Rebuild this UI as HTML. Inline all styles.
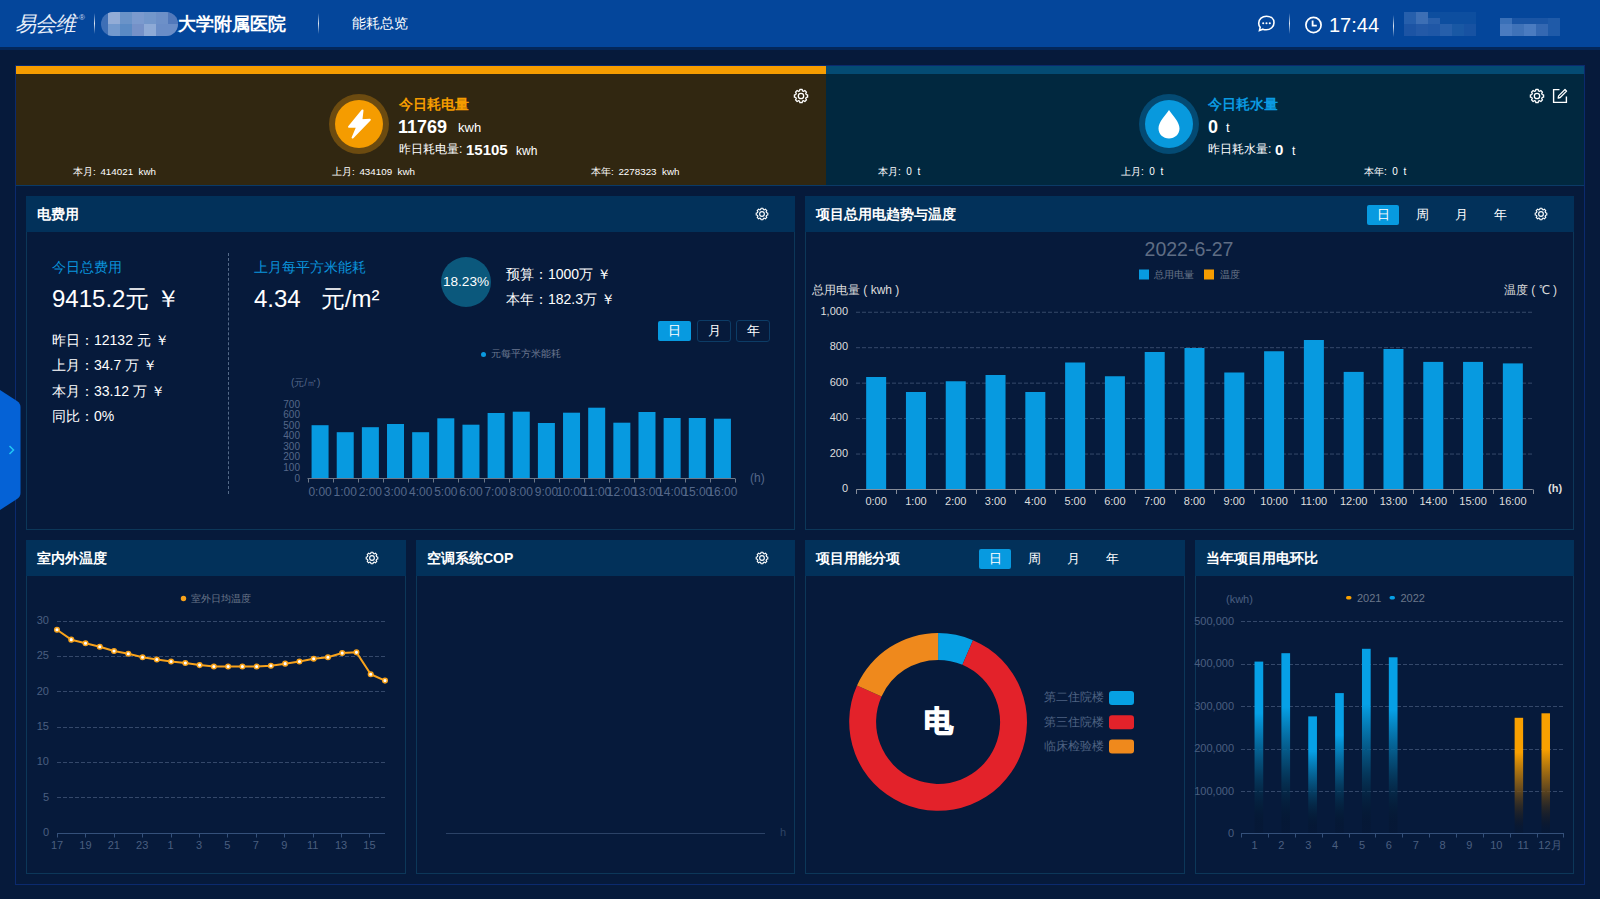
<!DOCTYPE html>
<html><head><meta charset="utf-8">
<style>
*{box-sizing:border-box}
html,body{margin:0;padding:0}
body{width:1600px;height:899px;background:#061a3b;position:relative;overflow:hidden;font-family:"Liberation Sans",sans-serif;color:#fff}
.a{position:absolute}
.hdr{left:0;top:0;width:1600px;height:47px;background:#04469b}
.strip{left:0;top:47px;width:1600px;height:3px;background:#03275a}
.sep{width:1px;background:linear-gradient(rgba(255,255,255,0),rgba(255,255,255,.85) 50%,rgba(255,255,255,0))!important}
.outer{left:15px;top:65px;width:1570px;height:820px;border:1px solid #0b2a6e}
.panel{border:1px solid #0c3759;background:#061a3b}
.ph{left:-1px;top:-1px;right:-1px;height:36px;background:#02315a}
.pt{left:11px;top:0;line-height:36px;font-size:14px;font-weight:bold;color:#fff}
.tabs span{position:absolute;top:9px;width:32px;height:20px;line-height:20px;text-align:center;font-size:13px;color:#fff;border-radius:2px}
.tabs span.on{background:#079ae0}
.gear{width:16px;height:16px}
.lbl{font-size:11px;color:#5d708c}
</style></head>
<body>
<svg width="0" height="0" style="position:absolute"><defs><symbol id="gear" viewBox="0 0 16 16"><path d="M6.60 2.78 L6.84 1.40 L9.16 1.40 L9.40 2.78 L10.70 3.32 L11.84 2.51 L13.49 4.16 L12.68 5.30 L13.22 6.60 L14.60 6.84 L14.60 9.16 L13.22 9.40 L12.68 10.70 L13.49 11.84 L11.84 13.49 L10.70 12.68 L9.40 13.22 L9.16 14.60 L6.84 14.60 L6.60 13.22 L5.30 12.68 L4.16 13.49 L2.51 11.84 L3.32 10.70 L2.78 9.40 L1.40 9.16 L1.40 6.84 L2.78 6.60 L3.32 5.30 L2.51 4.16 L4.16 2.51 L5.30 3.32Z" fill="none" stroke="#fff" stroke-width="1.3" stroke-linejoin="round"/><circle cx="8" cy="8" r="2.7" fill="none" stroke="#fff" stroke-width="1.3"/></symbol></defs></svg>
<!-- header -->
<div class="a hdr"></div>
<div class="a strip"></div>
<!-- logo -->
<div class="a" style="left:15px;top:11px;font-size:21px;line-height:26px;color:#e8eef8;font-style:italic;letter-spacing:-1px">易会维</div>
<div class="a" style="left:79px;top:13px;font-size:8px;color:#c9d6ee">®</div>
<div class="a sep" style="left:94px;top:13px;height:21px"></div>
<!-- mosaic -->
<div class="a" style="left:101px;top:12px;width:77px;height:24px;border-radius:12px;background:#3e6fb6;overflow:hidden">
 <div class="a" style="left:7px;top:0;width:12px;height:12px;background:#93acd6"></div>
 <div class="a" style="left:19px;top:0;width:12px;height:12px;background:#6a93c8"></div>
 <div class="a" style="left:31px;top:0;width:12px;height:12px;background:#7b9ace"></div>
 <div class="a" style="left:43px;top:0;width:12px;height:12px;background:#7397cb"></div>
 <div class="a" style="left:55px;top:0;width:12px;height:12px;background:#6d90c8"></div>
 <div class="a" style="left:67px;top:0;width:12px;height:12px;background:#5279bb"></div>
 <div class="a" style="left:7px;top:12px;width:12px;height:12px;background:#7399cd"></div>
 <div class="a" style="left:19px;top:12px;width:12px;height:12px;background:#5a8ac4"></div>
 <div class="a" style="left:31px;top:12px;width:12px;height:12px;background:#7591c8"></div>
 <div class="a" style="left:43px;top:12px;width:12px;height:12px;background:#8eaad6"></div>
 <div class="a" style="left:55px;top:12px;width:12px;height:12px;background:#6a8dc7"></div>
 <div class="a" style="left:67px;top:12px;width:12px;height:12px;background:#6a8dc7"></div>
</div>
<div class="a" style="left:178px;top:11px;font-size:17.7px;line-height:26px;font-weight:bold;color:#fff">大学附属医院</div>
<div class="a sep" style="left:318px;top:13px;height:21px"></div>
<div class="a" style="left:352px;top:13px;font-size:14px;line-height:20px;color:#fff">能耗总览</div>
<!-- right header -->
<svg class="a" style="left:1257px;top:15px" width="19" height="18" viewBox="0 0 19 18"><path d="M9.5 1.2C5.2 1.2 1.7 4.2 1.7 8.2c0 1.6.6 3 1.5 4.1l-.7 3.1 3.4-1.2c1 .4 2.1.6 3.3.6 4.3 0 7.8-3.1 7.8-7.1S13.8 1.2 9.5 1.2z" fill="none" stroke="#fff" stroke-width="1.6"/><circle cx="6.2" cy="8.3" r="1.05" fill="#fff"/><circle cx="9.5" cy="8.3" r="1.05" fill="#fff"/><circle cx="12.8" cy="8.3" r="1.05" fill="#fff"/></svg>
<div class="a sep" style="left:1289px;top:13px;height:21px"></div>
<svg class="a" style="left:1304px;top:16px" width="19" height="18" viewBox="0 0 19 18"><circle cx="9.5" cy="9" r="7.6" fill="none" stroke="#fff" stroke-width="1.7"/><path d="M8.6 4.6v5h4.2" fill="none" stroke="#fff" stroke-width="1.8"/></svg>
<div class="a" style="left:1329px;top:13px;font-size:20px;line-height:24px;color:#fff">17:44</div>
<div class="a sep" style="left:1393px;top:15px;height:22px"></div>
<div class="a" style="left:1404px;top:12px;width:72px;height:24px;background:#0f4fa0;opacity:.9">
 <div class="a" style="left:0;top:0;width:12px;height:12px;background:#2a62ae"></div>
 <div class="a" style="left:12px;top:0;width:12px;height:12px;background:#4474b8"></div>
 <div class="a" style="left:24px;top:6px;width:12px;height:6px;background:#2d62ad"></div>
 <div class="a" style="left:0;top:12px;width:12px;height:12px;background:#1f56a5"></div>
 <div class="a" style="left:12px;top:12px;width:12px;height:12px;background:#275ca9"></div>
 <div class="a" style="left:24px;top:12px;width:12px;height:12px;background:#2359a8"></div>
 <div class="a" style="left:36px;top:12px;width:12px;height:12px;background:#2a62ad"></div>
 <div class="a" style="left:48px;top:12px;width:12px;height:12px;background:#1c5aa6"></div>
 <div class="a" style="left:60px;top:12px;width:12px;height:12px;background:#1a54a3"></div>
</div>
<div class="a" style="left:1500px;top:18px;width:60px;height:18px;background:#1a55a5">
 <div class="a" style="left:0;top:0;width:12px;height:6px;background:#3a70b8"></div>
 <div class="a" style="left:0;top:6px;width:12px;height:12px;background:#4a7bc0"></div>
 <div class="a" style="left:12px;top:6px;width:12px;height:12px;background:#3f72b8"></div>
 <div class="a" style="left:24px;top:6px;width:12px;height:12px;background:#4a7bc0"></div>
 <div class="a" style="left:36px;top:6px;width:12px;height:12px;background:#3468b2"></div>
 <div class="a" style="left:48px;top:0;width:12px;height:18px;background:#1f5aa8"></div>
</div>

<div class="a outer"></div>

<!-- top panel -->
<div class="a" style="left:16px;top:66px;width:810px;height:119px;background:#312711"></div>
<div class="a" style="left:16px;top:66px;width:810px;height:8px;background:#f59c00"></div>
<div class="a" style="left:826px;top:66px;width:758px;height:119px;background:#01283f"></div>
<div class="a" style="left:826px;top:66px;width:758px;height:8px;background:#044b73"></div>
<div class="a" style="left:16px;top:185px;width:1568px;height:1px;background:#0b3a66"></div>
<!-- electricity -->
<div class="a" style="left:329px;top:94px;width:60px;height:60px;border-radius:50%;background:#6c4b10"></div>
<div class="a" style="left:335px;top:100px;width:48px;height:48px;border-radius:50%;background:#f59c00"></div>
<svg class="a" style="left:335px;top:100px" width="48" height="48" viewBox="0 0 48 48"><path d="M27.5 10.5 L14 26.8 L22.3 26.6 L17.6 37.6 L34.8 19.8 L26.4 20.2 Z" fill="#fff" stroke="#fff" stroke-width="2" stroke-linejoin="round"/></svg>
<div class="a" style="left:399px;top:95px;font-size:14px;line-height:18px;font-weight:bold;color:#f59c00">今日耗电量</div>
<div class="a" style="left:398px;top:117px;font-size:18px;line-height:20px;font-weight:bold;color:#fff">11769</div>
<div class="a" style="left:458px;top:120px;font-size:13px;line-height:16px;color:#fff">kwh</div>
<div class="a" style="left:399px;top:141px;font-size:12px;line-height:16px;color:#fff">昨日耗电量:</div>
<div class="a" style="left:466px;top:142px;font-size:15px;line-height:16px;font-weight:bold;color:#fff">15105</div>
<div class="a" style="left:516px;top:144px;font-size:12px;line-height:14px;color:#fff">kwh</div>
<div class="a" style="left:73px;top:166px;font-size:9.8px;line-height:12px;color:#fff">本月:&thinsp; 414021&nbsp; kwh</div>
<div class="a" style="left:332px;top:166px;font-size:9.8px;line-height:12px;color:#fff">上月:&thinsp; 434109&nbsp; kwh</div>
<div class="a" style="left:591px;top:166px;font-size:9.8px;line-height:12px;color:#fff">本年:&thinsp; 2278323&nbsp; kwh</div>
<svg class="a" style="left:793px;top:88px" width="16" height="16" viewBox="0 0 16 16"><use href="#gear"/></svg>
<!-- water -->
<div class="a" style="left:1139px;top:94px;width:60px;height:60px;border-radius:50%;background:#044a73"></div>
<div class="a" style="left:1145px;top:100px;width:48px;height:48px;border-radius:50%;background:#0899dd"></div>
<svg class="a" style="left:1145px;top:100px" width="48" height="48" viewBox="0 0 48 48"><path d="M24 10 C20 16 13.5 22 13.5 28.5 C13.5 34.3 18.2 38.5 24 38.5 C29.8 38.5 34.5 34.3 34.5 28.5 C34.5 22 28 16 24 10 Z" fill="#fff"/></svg>
<div class="a" style="left:1208px;top:95px;font-size:14px;line-height:18px;font-weight:bold;color:#0b9ae2">今日耗水量</div>
<div class="a" style="left:1208px;top:117px;font-size:18px;line-height:20px;font-weight:bold;color:#fff">0</div>
<div class="a" style="left:1226px;top:120px;font-size:13px;line-height:16px;color:#fff">t</div>
<div class="a" style="left:1208px;top:141px;font-size:12px;line-height:16px;color:#fff">昨日耗水量:</div>
<div class="a" style="left:1275px;top:142px;font-size:15px;line-height:16px;font-weight:bold;color:#fff">0</div>
<div class="a" style="left:1292px;top:144px;font-size:12px;line-height:14px;color:#fff">t</div>
<div class="a" style="left:878px;top:166px;font-size:10px;line-height:12px;color:#fff">本月:&nbsp; 0&nbsp; t</div>
<div class="a" style="left:1121px;top:166px;font-size:10px;line-height:12px;color:#fff">上月:&nbsp; 0&nbsp; t</div>
<div class="a" style="left:1364px;top:166px;font-size:10px;line-height:12px;color:#fff">本年:&nbsp; 0&nbsp; t</div>
<svg class="a" style="left:1529px;top:88px" width="16" height="16" viewBox="0 0 16 16"><use href="#gear"/></svg>
<svg class="a" style="left:1552px;top:88px" width="16" height="16" viewBox="0 0 16 16"><path d="M7.5 1.6H1.6v12.8h12.8V8.6" fill="none" stroke="#fff" stroke-width="1.4"/><path d="M6.2 10 L6.6 7.9 L13 1.5 L14.6 3.1 L8.2 9.5 Z" fill="none" stroke="#fff" stroke-width="1.3" stroke-linejoin="round"/></svg>

<!-- row2 panels -->
<div class="a panel" style="left:26px;top:196px;width:769px;height:334px"><div class="a ph"><div class="a pt">电费用</div><svg class="a" style="left:729px;top:11px" width="14" height="14" viewBox="0 0 16 16"><use href="#gear"/></svg></div>
 <div class="a" style="left:25px;top:61px;font-size:14px;line-height:18px;color:#0a94dc">今日总费用</div>
 <div class="a" style="left:25px;top:88px;font-size:24px;line-height:28px;color:#fff">9415.2元 ￥</div>
 <div class="a" style="left:25px;top:134px;font-size:14px;line-height:18px;color:#fff">昨日：12132 元 ￥</div>
 <div class="a" style="left:25px;top:159px;font-size:14px;line-height:18px;color:#fff">上月：34.7 万 ￥</div>
 <div class="a" style="left:25px;top:185px;font-size:14px;line-height:18px;color:#fff">本月：33.12 万 ￥</div>
 <div class="a" style="left:25px;top:210px;font-size:14px;line-height:18px;color:#fff">同比：0%</div>
 <div class="a" style="left:201px;top:56px;width:0;height:241px;border-left:1px dashed #556a88"></div>
 <div class="a" style="left:227px;top:61px;font-size:14px;line-height:18px;color:#0a94dc">上月每平方米能耗</div>
 <div class="a" style="left:227px;top:88px;font-size:24px;line-height:28px;color:#fff">4.34&nbsp;&nbsp; 元/m²</div>
 <div class="a" style="left:414px;top:60px;width:50px;height:50px;border-radius:50%;background:#0b587c;font-size:13.6px;line-height:50px;text-align:center;color:#fff">18.23%</div>
 <div class="a" style="left:479px;top:68px;font-size:14px;line-height:18px;color:#fff">预算：1000万 ￥</div>
 <div class="a" style="left:479px;top:93px;font-size:14px;line-height:18px;color:#fff">本年：182.3万 ￥</div>
 <div class="a tabs" style="left:0;top:0">
  <span class="on" style="left:631px;top:124px;width:33px;line-height:19px">日</span>
  <span style="left:670px;top:123px;width:34px;height:22px;line-height:20px;border:1px solid #0c3c66;border-radius:3px">月</span>
  <span style="left:709px;top:123px;width:34px;height:22px;line-height:20px;border:1px solid #0c3c66;border-radius:3px">年</span>
 </div>
 <div class="a" style="left:454px;top:155px;width:5px;height:5px;border-radius:50%;background:#0a9ae0"></div>
 <div class="a lbl" style="left:464px;top:151px;font-size:10px;line-height:12px;color:#6b7890">元每平方米能耗</div>
</div>
<div class="a panel" style="left:805px;top:196px;width:769px;height:334px"><div class="a ph"><div class="a pt">项目总用电趋势与温度</div>
 <div class="a tabs" style="left:0;top:0">
  <span class="on" style="left:562px">日</span><span style="left:601px">周</span><span style="left:640px">月</span><span style="left:679px">年</span>
 </div><svg class="a" style="left:729px;top:11px" width="14" height="14" viewBox="0 0 16 16"><use href="#gear"/></svg></div></div>
<!-- row3 panels -->
<div class="a panel" style="left:26px;top:540px;width:380px;height:334px"><div class="a ph"><div class="a pt">室内外温度</div><svg class="a" style="left:339px;top:11px" width="14" height="14" viewBox="0 0 16 16"><use href="#gear"/></svg></div></div>
<div class="a panel" style="left:416px;top:540px;width:379px;height:334px"><div class="a ph"><div class="a pt">空调系统COP</div><svg class="a" style="left:339px;top:11px" width="14" height="14" viewBox="0 0 16 16"><use href="#gear"/></svg></div></div>
<div class="a panel" style="left:805px;top:540px;width:380px;height:334px"><div class="a ph"><div class="a pt">项目用能分项</div><div class="a tabs" style="left:0;top:0"><span class="on" style="left:174px">日</span><span style="left:213px">周</span><span style="left:252px">月</span><span style="left:291px">年</span></div></div></div>
<div class="a panel" style="left:1195px;top:540px;width:379px;height:334px"><div class="a ph"><div class="a pt">当年项目用电环比</div></div></div>

<!-- left tab -->
<svg class="a" style="left:0;top:388px" width="22" height="124" viewBox="0 0 22 124"><path d="M0 2 L17 13 Q20.5 15.5 20.5 19 V105 Q20.5 108.5 17 111 L0 122 Z" fill="#0562d6"/><path d="M9.5 58 L13.5 62 L9.5 66" fill="none" stroke="#21c6f4" stroke-width="1.5"/></svg>
<!--CHARTS-->
<svg class="a" style="left:0;top:0" width="1600" height="899" viewBox="0 0 1600 899">
<rect x="311.57" y="425.2" width="17" height="52.8" fill="#079ae0"/>
<rect x="336.72" y="432.2" width="17" height="45.8" fill="#079ae0"/>
<rect x="361.87" y="427.2" width="17" height="50.8" fill="#079ae0"/>
<rect x="387.01" y="424" width="17" height="54" fill="#079ae0"/>
<rect x="412.16" y="432.2" width="17" height="45.8" fill="#079ae0"/>
<rect x="437.31" y="418.3" width="17" height="59.7" fill="#079ae0"/>
<rect x="462.46" y="424.7" width="17" height="53.3" fill="#079ae0"/>
<rect x="487.6" y="413" width="17" height="65" fill="#079ae0"/>
<rect x="512.75" y="411.7" width="17" height="66.3" fill="#079ae0"/>
<rect x="537.9" y="423" width="17" height="55" fill="#079ae0"/>
<rect x="563.04" y="412.7" width="17" height="65.3" fill="#079ae0"/>
<rect x="588.19" y="407.7" width="17" height="70.3" fill="#079ae0"/>
<rect x="613.34" y="422.7" width="17" height="55.3" fill="#079ae0"/>
<rect x="638.49" y="412" width="17" height="66" fill="#079ae0"/>
<rect x="663.63" y="418" width="17" height="60" fill="#079ae0"/>
<rect x="688.78" y="418" width="17" height="60" fill="#079ae0"/>
<rect x="713.93" y="418.7" width="17" height="59.3" fill="#079ae0"/>
<path d="M307.5 478.5H735" stroke="#6d7889" stroke-width="1"/>
<path d="M308.5 478.5v4" stroke="#6d7889" stroke-width="1"/>
<path d="M333.5 478.5v4" stroke="#6d7889" stroke-width="1"/>
<path d="M358.5 478.5v4" stroke="#6d7889" stroke-width="1"/>
<path d="M383.5 478.5v4" stroke="#6d7889" stroke-width="1"/>
<path d="M408.5 478.5v4" stroke="#6d7889" stroke-width="1"/>
<path d="M433.5 478.5v4" stroke="#6d7889" stroke-width="1"/>
<path d="M458.5 478.5v4" stroke="#6d7889" stroke-width="1"/>
<path d="M484.5 478.5v4" stroke="#6d7889" stroke-width="1"/>
<path d="M509.5 478.5v4" stroke="#6d7889" stroke-width="1"/>
<path d="M534.5 478.5v4" stroke="#6d7889" stroke-width="1"/>
<path d="M559.5 478.5v4" stroke="#6d7889" stroke-width="1"/>
<path d="M584.5 478.5v4" stroke="#6d7889" stroke-width="1"/>
<path d="M609.5 478.5v4" stroke="#6d7889" stroke-width="1"/>
<path d="M634.5 478.5v4" stroke="#6d7889" stroke-width="1"/>
<path d="M660.5 478.5v4" stroke="#6d7889" stroke-width="1"/>
<path d="M685.5 478.5v4" stroke="#6d7889" stroke-width="1"/>
<path d="M710.5 478.5v4" stroke="#6d7889" stroke-width="1"/>
<path d="M735.5 478.5v4" stroke="#6d7889" stroke-width="1"/>
<text x="320.07" y="496" font-size="12" fill="#55688a" text-anchor="middle">0:00</text>
<text x="345.22" y="496" font-size="12" fill="#55688a" text-anchor="middle">1:00</text>
<text x="370.37" y="496" font-size="12" fill="#55688a" text-anchor="middle">2:00</text>
<text x="395.51" y="496" font-size="12" fill="#55688a" text-anchor="middle">3:00</text>
<text x="420.66" y="496" font-size="12" fill="#55688a" text-anchor="middle">4:00</text>
<text x="445.81" y="496" font-size="12" fill="#55688a" text-anchor="middle">5:00</text>
<text x="470.96" y="496" font-size="12" fill="#55688a" text-anchor="middle">6:00</text>
<text x="496.1" y="496" font-size="12" fill="#55688a" text-anchor="middle">7:00</text>
<text x="521.25" y="496" font-size="12" fill="#55688a" text-anchor="middle">8:00</text>
<text x="546.4" y="496" font-size="12" fill="#55688a" text-anchor="middle">9:00</text>
<text x="571.54" y="496" font-size="12" fill="#55688a" text-anchor="middle">10:00</text>
<text x="596.69" y="496" font-size="12" fill="#55688a" text-anchor="middle">11:00</text>
<text x="621.84" y="496" font-size="12" fill="#55688a" text-anchor="middle">12:00</text>
<text x="646.99" y="496" font-size="12" fill="#55688a" text-anchor="middle">13:00</text>
<text x="672.13" y="496" font-size="12" fill="#55688a" text-anchor="middle">14:00</text>
<text x="697.28" y="496" font-size="12" fill="#55688a" text-anchor="middle">15:00</text>
<text x="722.43" y="496" font-size="12" fill="#55688a" text-anchor="middle">16:00</text>
<text x="300" y="481.5" font-size="10" fill="#55688a" text-anchor="end">0</text>
<text x="300" y="470.93" font-size="10" fill="#55688a" text-anchor="end">100</text>
<text x="300" y="460.36" font-size="10" fill="#55688a" text-anchor="end">200</text>
<text x="300" y="449.79" font-size="10" fill="#55688a" text-anchor="end">300</text>
<text x="300" y="439.22" font-size="10" fill="#55688a" text-anchor="end">400</text>
<text x="300" y="428.65" font-size="10" fill="#55688a" text-anchor="end">500</text>
<text x="300" y="418.08" font-size="10" fill="#55688a" text-anchor="end">600</text>
<text x="300" y="407.51" font-size="10" fill="#55688a" text-anchor="end">700</text>
<text x="291" y="386" font-size="10" fill="#55688a">(元/㎡)</text>
<text x="750" y="481.5" font-size="12" fill="#55688a">(h)</text>
<path d="M856 454.05H1533" stroke="#36496a" stroke-width="1" stroke-dasharray="4 2"/>
<path d="M856 418.6H1533" stroke="#36496a" stroke-width="1" stroke-dasharray="4 2"/>
<path d="M856 383.15H1533" stroke="#36496a" stroke-width="1" stroke-dasharray="4 2"/>
<path d="M856 347.7H1533" stroke="#36496a" stroke-width="1" stroke-dasharray="4 2"/>
<path d="M856 312.25H1533" stroke="#36496a" stroke-width="1" stroke-dasharray="4 2"/>
<rect x="866.15" y="377" width="20" height="112" fill="#079ae0"/>
<rect x="905.94" y="392" width="20" height="97" fill="#079ae0"/>
<rect x="945.74" y="381.25" width="20" height="107.75" fill="#079ae0"/>
<rect x="985.53" y="375" width="20" height="114" fill="#079ae0"/>
<rect x="1025.32" y="392" width="20" height="97" fill="#079ae0"/>
<rect x="1065.12" y="362.5" width="20" height="126.5" fill="#079ae0"/>
<rect x="1104.91" y="376.25" width="20" height="112.75" fill="#079ae0"/>
<rect x="1144.71" y="352" width="20" height="137" fill="#079ae0"/>
<rect x="1184.5" y="348" width="20" height="141" fill="#079ae0"/>
<rect x="1224.29" y="372.5" width="20" height="116.5" fill="#079ae0"/>
<rect x="1264.09" y="351.25" width="20" height="137.75" fill="#079ae0"/>
<rect x="1303.88" y="340" width="20" height="149" fill="#079ae0"/>
<rect x="1343.68" y="371.9" width="20" height="117.1" fill="#079ae0"/>
<rect x="1383.47" y="349" width="20" height="140" fill="#079ae0"/>
<rect x="1423.26" y="361.9" width="20" height="127.1" fill="#079ae0"/>
<rect x="1463.06" y="361.9" width="20" height="127.1" fill="#079ae0"/>
<rect x="1502.85" y="363.4" width="20" height="125.6" fill="#079ae0"/>
<path d="M856.25 489.5H1532.75" stroke="#858c99" stroke-width="1"/>
<path d="M856.5 489.5v4.5" stroke="#858c99" stroke-width="1"/>
<path d="M896.5 489.5v4.5" stroke="#858c99" stroke-width="1"/>
<path d="M936.5 489.5v4.5" stroke="#858c99" stroke-width="1"/>
<path d="M976.5 489.5v4.5" stroke="#858c99" stroke-width="1"/>
<path d="M1015.5 489.5v4.5" stroke="#858c99" stroke-width="1"/>
<path d="M1055.5 489.5v4.5" stroke="#858c99" stroke-width="1"/>
<path d="M1095.5 489.5v4.5" stroke="#858c99" stroke-width="1"/>
<path d="M1135.5 489.5v4.5" stroke="#858c99" stroke-width="1"/>
<path d="M1175.5 489.5v4.5" stroke="#858c99" stroke-width="1"/>
<path d="M1214.5 489.5v4.5" stroke="#858c99" stroke-width="1"/>
<path d="M1254.5 489.5v4.5" stroke="#858c99" stroke-width="1"/>
<path d="M1294.5 489.5v4.5" stroke="#858c99" stroke-width="1"/>
<path d="M1334.5 489.5v4.5" stroke="#858c99" stroke-width="1"/>
<path d="M1374.5 489.5v4.5" stroke="#858c99" stroke-width="1"/>
<path d="M1413.5 489.5v4.5" stroke="#858c99" stroke-width="1"/>
<path d="M1453.5 489.5v4.5" stroke="#858c99" stroke-width="1"/>
<path d="M1493.5 489.5v4.5" stroke="#858c99" stroke-width="1"/>
<path d="M1533.5 489.5v4.5" stroke="#858c99" stroke-width="1"/>
<text x="876.15" y="505" font-size="11" fill="#dedede" text-anchor="middle">0:00</text>
<text x="915.94" y="505" font-size="11" fill="#dedede" text-anchor="middle">1:00</text>
<text x="955.74" y="505" font-size="11" fill="#dedede" text-anchor="middle">2:00</text>
<text x="995.53" y="505" font-size="11" fill="#dedede" text-anchor="middle">3:00</text>
<text x="1035.32" y="505" font-size="11" fill="#dedede" text-anchor="middle">4:00</text>
<text x="1075.12" y="505" font-size="11" fill="#dedede" text-anchor="middle">5:00</text>
<text x="1114.91" y="505" font-size="11" fill="#dedede" text-anchor="middle">6:00</text>
<text x="1154.71" y="505" font-size="11" fill="#dedede" text-anchor="middle">7:00</text>
<text x="1194.5" y="505" font-size="11" fill="#dedede" text-anchor="middle">8:00</text>
<text x="1234.29" y="505" font-size="11" fill="#dedede" text-anchor="middle">9:00</text>
<text x="1274.09" y="505" font-size="11" fill="#dedede" text-anchor="middle">10:00</text>
<text x="1313.88" y="505" font-size="11" fill="#dedede" text-anchor="middle">11:00</text>
<text x="1353.68" y="505" font-size="11" fill="#dedede" text-anchor="middle">12:00</text>
<text x="1393.47" y="505" font-size="11" fill="#dedede" text-anchor="middle">13:00</text>
<text x="1433.26" y="505" font-size="11" fill="#dedede" text-anchor="middle">14:00</text>
<text x="1473.06" y="505" font-size="11" fill="#dedede" text-anchor="middle">15:00</text>
<text x="1512.85" y="505" font-size="11" fill="#dedede" text-anchor="middle">16:00</text>
<text x="848" y="492.2" font-size="11" fill="#dedede" text-anchor="end">0</text>
<text x="848" y="456.75" font-size="11" fill="#dedede" text-anchor="end">200</text>
<text x="848" y="421.3" font-size="11" fill="#dedede" text-anchor="end">400</text>
<text x="848" y="385.85" font-size="11" fill="#dedede" text-anchor="end">600</text>
<text x="848" y="350.4" font-size="11" fill="#dedede" text-anchor="end">800</text>
<text x="848" y="314.95" font-size="11" fill="#dedede" text-anchor="end">1,000</text>
<text x="1548" y="492" font-size="11" font-weight="bold" fill="#dedede">(h)</text>
<text x="812" y="294" font-size="12" fill="#dedede">总用电量 ( kwh )</text>
<text x="1557" y="294" font-size="12" fill="#dedede" text-anchor="end">温度 ( ℃ )</text>
<text x="1189" y="256" font-size="19.5" fill="#5f6d84" text-anchor="middle">2022-6-27</text>
<rect x="1139" y="269.5" width="10" height="10" fill="#079ae0"/><text x="1154" y="278" font-size="10" fill="#6b778a">总用电量</text>
<rect x="1204" y="269.5" width="10" height="10" fill="#f59c00"/><text x="1220" y="278" font-size="10" fill="#6b778a">温度</text>
</svg>
<svg class="a" style="left:0;top:0" width="1600" height="899" viewBox="0 0 1600 899">
<path d="M57 797.5H385" stroke="#34486a" stroke-width="1" stroke-dasharray="4 2"/>
<path d="M57 762.5H385" stroke="#34486a" stroke-width="1" stroke-dasharray="4 2"/>
<path d="M57 727.5H385" stroke="#34486a" stroke-width="1" stroke-dasharray="4 2"/>
<path d="M57 691.5H385" stroke="#34486a" stroke-width="1" stroke-dasharray="4 2"/>
<path d="M57 656.5H385" stroke="#34486a" stroke-width="1" stroke-dasharray="4 2"/>
<path d="M57 621.5H385" stroke="#34486a" stroke-width="1" stroke-dasharray="4 2"/>
<path d="M57 833.5H385" stroke="#34507a" stroke-width="1"/>
<path d="M57.5 833.5v4" stroke="#34507a" stroke-width="1"/>
<path d="M85.5 833.5v4" stroke="#34507a" stroke-width="1"/>
<path d="M114.5 833.5v4" stroke="#34507a" stroke-width="1"/>
<path d="M142.5 833.5v4" stroke="#34507a" stroke-width="1"/>
<path d="M171.5 833.5v4" stroke="#34507a" stroke-width="1"/>
<path d="M199.5 833.5v4" stroke="#34507a" stroke-width="1"/>
<path d="M227.5 833.5v4" stroke="#34507a" stroke-width="1"/>
<path d="M256.5 833.5v4" stroke="#34507a" stroke-width="1"/>
<path d="M284.5 833.5v4" stroke="#34507a" stroke-width="1"/>
<path d="M313.5 833.5v4" stroke="#34507a" stroke-width="1"/>
<path d="M341.5 833.5v4" stroke="#34507a" stroke-width="1"/>
<path d="M369.5 833.5v4" stroke="#34507a" stroke-width="1"/>
<text x="57" y="849" font-size="11" fill="#4a5f80" text-anchor="middle">17</text>
<text x="85.4" y="849" font-size="11" fill="#4a5f80" text-anchor="middle">19</text>
<text x="113.8" y="849" font-size="11" fill="#4a5f80" text-anchor="middle">21</text>
<text x="142.2" y="849" font-size="11" fill="#4a5f80" text-anchor="middle">23</text>
<text x="170.6" y="849" font-size="11" fill="#4a5f80" text-anchor="middle">1</text>
<text x="199" y="849" font-size="11" fill="#4a5f80" text-anchor="middle">3</text>
<text x="227.4" y="849" font-size="11" fill="#4a5f80" text-anchor="middle">5</text>
<text x="255.8" y="849" font-size="11" fill="#4a5f80" text-anchor="middle">7</text>
<text x="284.2" y="849" font-size="11" fill="#4a5f80" text-anchor="middle">9</text>
<text x="312.6" y="849" font-size="11" fill="#4a5f80" text-anchor="middle">11</text>
<text x="341" y="849" font-size="11" fill="#4a5f80" text-anchor="middle">13</text>
<text x="369.4" y="849" font-size="11" fill="#4a5f80" text-anchor="middle">15</text>
<text x="49" y="836" font-size="11" fill="#4a5f80" text-anchor="end">0</text>
<text x="49" y="800.67" font-size="11" fill="#4a5f80" text-anchor="end">5</text>
<text x="49" y="765.34" font-size="11" fill="#4a5f80" text-anchor="end">10</text>
<text x="49" y="730.01" font-size="11" fill="#4a5f80" text-anchor="end">15</text>
<text x="49" y="694.68" font-size="11" fill="#4a5f80" text-anchor="end">20</text>
<text x="49" y="659.35" font-size="11" fill="#4a5f80" text-anchor="end">25</text>
<text x="49" y="624.02" font-size="11" fill="#4a5f80" text-anchor="end">30</text>
<polyline points="57,629.78 71.26,639.66 85.52,643.19 99.78,646.72 114.04,650.96 128.3,653.78 142.56,657.31 156.82,659.43 171.08,661.55 185.34,662.96 199.6,665.08 213.86,666.49 228.12,666.49 242.38,666.49 256.64,666.49 270.9,665.78 285.16,663.67 299.42,661.55 313.68,658.72 327.94,657.31 342.2,653.08 356.46,652.37 370.72,674.26 384.98,680.61" fill="none" stroke="#f7a21b" stroke-width="2" stroke-linejoin="round"/>
<circle cx="57" cy="629.78" r="2.3" fill="#fff" stroke="#f7a21b" stroke-width="1.5"/>
<circle cx="71.26" cy="639.66" r="2.3" fill="#fff" stroke="#f7a21b" stroke-width="1.5"/>
<circle cx="85.52" cy="643.19" r="2.3" fill="#fff" stroke="#f7a21b" stroke-width="1.5"/>
<circle cx="99.78" cy="646.72" r="2.3" fill="#fff" stroke="#f7a21b" stroke-width="1.5"/>
<circle cx="114.04" cy="650.96" r="2.3" fill="#fff" stroke="#f7a21b" stroke-width="1.5"/>
<circle cx="128.3" cy="653.78" r="2.3" fill="#fff" stroke="#f7a21b" stroke-width="1.5"/>
<circle cx="142.56" cy="657.31" r="2.3" fill="#fff" stroke="#f7a21b" stroke-width="1.5"/>
<circle cx="156.82" cy="659.43" r="2.3" fill="#fff" stroke="#f7a21b" stroke-width="1.5"/>
<circle cx="171.08" cy="661.55" r="2.3" fill="#fff" stroke="#f7a21b" stroke-width="1.5"/>
<circle cx="185.34" cy="662.96" r="2.3" fill="#fff" stroke="#f7a21b" stroke-width="1.5"/>
<circle cx="199.6" cy="665.08" r="2.3" fill="#fff" stroke="#f7a21b" stroke-width="1.5"/>
<circle cx="213.86" cy="666.49" r="2.3" fill="#fff" stroke="#f7a21b" stroke-width="1.5"/>
<circle cx="228.12" cy="666.49" r="2.3" fill="#fff" stroke="#f7a21b" stroke-width="1.5"/>
<circle cx="242.38" cy="666.49" r="2.3" fill="#fff" stroke="#f7a21b" stroke-width="1.5"/>
<circle cx="256.64" cy="666.49" r="2.3" fill="#fff" stroke="#f7a21b" stroke-width="1.5"/>
<circle cx="270.9" cy="665.78" r="2.3" fill="#fff" stroke="#f7a21b" stroke-width="1.5"/>
<circle cx="285.16" cy="663.67" r="2.3" fill="#fff" stroke="#f7a21b" stroke-width="1.5"/>
<circle cx="299.42" cy="661.55" r="2.3" fill="#fff" stroke="#f7a21b" stroke-width="1.5"/>
<circle cx="313.68" cy="658.72" r="2.3" fill="#fff" stroke="#f7a21b" stroke-width="1.5"/>
<circle cx="327.94" cy="657.31" r="2.3" fill="#fff" stroke="#f7a21b" stroke-width="1.5"/>
<circle cx="342.2" cy="653.08" r="2.3" fill="#fff" stroke="#f7a21b" stroke-width="1.5"/>
<circle cx="356.46" cy="652.37" r="2.3" fill="#fff" stroke="#f7a21b" stroke-width="1.5"/>
<circle cx="370.72" cy="674.26" r="2.3" fill="#fff" stroke="#f7a21b" stroke-width="1.5"/>
<circle cx="384.98" cy="680.61" r="2.3" fill="#fff" stroke="#f7a21b" stroke-width="1.5"/>
<circle cx="183.5" cy="598.5" r="2.7" fill="#f7a21b"/><text x="191" y="602" font-size="10" fill="#6b778a">室外日均温度</text>
<path d="M446 833.5H765" stroke="#2b4266" stroke-width="1"/><text x="780" y="836" font-size="11" fill="#2e4466">h</text>
<path d="M938.1 633 A88.9 88.9 0 0 1 972.98 640.13 L962.42 664.87 A62 62 0 0 0 938.1 659.9 Z" fill="#06a0e3"/>
<path d="M972.98 640.13 A88.9 88.9 0 1 1 857.01 685.46 L881.55 696.48 A62 62 0 1 0 962.42 664.87 Z" fill="#e3222a"/>
<path d="M857.01 685.46 A88.9 88.9 0 0 1 938.1 633 L938.1 659.9 A62 62 0 0 0 881.55 696.48 Z" fill="#ef891c"/>
<text x="938.5" y="731" font-size="29" font-weight="bold" fill="#fff" stroke="#fff" stroke-width="1.3" text-anchor="middle">电</text>
<text x="1104" y="701.3" font-size="12" fill="#4e6282" text-anchor="end">第二住院楼</text>
<rect x="1109" y="691" width="25" height="14" rx="3" fill="#06a0e3"/>
<text x="1104" y="725.5" font-size="12" fill="#4e6282" text-anchor="end">第三住院楼</text>
<rect x="1109" y="715.2" width="25" height="14" rx="3" fill="#e3222a"/>
<text x="1104" y="749.7" font-size="12" fill="#4e6282" text-anchor="end">临床检验楼</text>
<rect x="1109" y="739.4" width="25" height="14" rx="3" fill="#ef891c"/>
<defs><linearGradient id="gb" x1="0" y1="0" x2="0" y2="1"><stop offset="0" stop-color="#06a0e6"/><stop offset=".3" stop-color="#06a0e6"/><stop offset=".62" stop-color="#05507a" stop-opacity=".8"/><stop offset=".97" stop-color="#020a18" stop-opacity=".12"/></linearGradient><linearGradient id="go" x1="0" y1="0" x2="0" y2="1"><stop offset="0" stop-color="#f9a000"/><stop offset=".3" stop-color="#f9a000"/><stop offset=".62" stop-color="#7a5418" stop-opacity=".85"/><stop offset=".97" stop-color="#0a0c14" stop-opacity=".15"/></linearGradient></defs>
<path d="M1241 791.5H1564" stroke="#34486a" stroke-width="1" stroke-dasharray="4 2"/>
<path d="M1241 749.5H1564" stroke="#34486a" stroke-width="1" stroke-dasharray="4 2"/>
<path d="M1241 706.5H1564" stroke="#34486a" stroke-width="1" stroke-dasharray="4 2"/>
<path d="M1241 664.5H1564" stroke="#34486a" stroke-width="1" stroke-dasharray="4 2"/>
<path d="M1241 621.5H1564" stroke="#34486a" stroke-width="1" stroke-dasharray="4 2"/>
<path d="M1241 833.5H1564" stroke="#34507a" stroke-width="1"/>
<path d="M1241.5 833.5v4" stroke="#34507a" stroke-width="1"/>
<path d="M1268.5 833.5v4" stroke="#34507a" stroke-width="1"/>
<path d="M1295.5 833.5v4" stroke="#34507a" stroke-width="1"/>
<path d="M1322.5 833.5v4" stroke="#34507a" stroke-width="1"/>
<path d="M1349.5 833.5v4" stroke="#34507a" stroke-width="1"/>
<path d="M1375.5 833.5v4" stroke="#34507a" stroke-width="1"/>
<path d="M1402.5 833.5v4" stroke="#34507a" stroke-width="1"/>
<path d="M1429.5 833.5v4" stroke="#34507a" stroke-width="1"/>
<path d="M1456.5 833.5v4" stroke="#34507a" stroke-width="1"/>
<path d="M1483.5 833.5v4" stroke="#34507a" stroke-width="1"/>
<path d="M1510.5 833.5v4" stroke="#34507a" stroke-width="1"/>
<path d="M1537.5 833.5v4" stroke="#34507a" stroke-width="1"/>
<path d="M1563.5 833.5v4" stroke="#34507a" stroke-width="1"/>
<text x="1254.53" y="849" font-size="11" fill="#4a5f80" text-anchor="middle">1</text>
<text x="1281.39" y="849" font-size="11" fill="#4a5f80" text-anchor="middle">2</text>
<text x="1308.25" y="849" font-size="11" fill="#4a5f80" text-anchor="middle">3</text>
<text x="1335.11" y="849" font-size="11" fill="#4a5f80" text-anchor="middle">4</text>
<text x="1361.97" y="849" font-size="11" fill="#4a5f80" text-anchor="middle">5</text>
<text x="1388.83" y="849" font-size="11" fill="#4a5f80" text-anchor="middle">6</text>
<text x="1415.69" y="849" font-size="11" fill="#4a5f80" text-anchor="middle">7</text>
<text x="1442.55" y="849" font-size="11" fill="#4a5f80" text-anchor="middle">8</text>
<text x="1469.41" y="849" font-size="11" fill="#4a5f80" text-anchor="middle">9</text>
<text x="1496.27" y="849" font-size="11" fill="#4a5f80" text-anchor="middle">10</text>
<text x="1523.13" y="849" font-size="11" fill="#4a5f80" text-anchor="middle">11</text>
<text x="1549.99" y="849" font-size="11" fill="#4a5f80" text-anchor="middle">12月</text>
<text x="1234" y="837" font-size="11" fill="#4a5f80" text-anchor="end">0</text>
<text x="1234" y="794.55" font-size="11" fill="#4a5f80" text-anchor="end">100,000</text>
<text x="1234" y="752.1" font-size="11" fill="#4a5f80" text-anchor="end">200,000</text>
<text x="1234" y="709.65" font-size="11" fill="#4a5f80" text-anchor="end">300,000</text>
<text x="1234" y="667.2" font-size="11" fill="#4a5f80" text-anchor="end">400,000</text>
<text x="1234" y="624.75" font-size="11" fill="#4a5f80" text-anchor="end">500,000</text>
<rect x="1254.53" y="661.6" width="8.7" height="171.4" fill="url(#gb)"/>
<rect x="1281.39" y="653.2" width="8.7" height="179.8" fill="url(#gb)"/>
<rect x="1308.25" y="716.4" width="8.7" height="116.6" fill="url(#gb)"/>
<rect x="1335.11" y="693.1" width="8.7" height="139.9" fill="url(#gb)"/>
<rect x="1361.97" y="648.8" width="8.7" height="184.2" fill="url(#gb)"/>
<rect x="1388.83" y="657.3" width="8.7" height="175.7" fill="url(#gb)"/>
<rect x="1514.63" y="717.8" width="8.5" height="115.2" fill="url(#go)"/>
<rect x="1541.49" y="713.3" width="8.5" height="119.7" fill="url(#go)"/>
<text x="1226" y="603" font-size="11" fill="#4a5f80">(kwh)</text>
<rect x="1346" y="596" width="5.5" height="3.5" rx="1.7" fill="#f9a000"/><text x="1357" y="601.5" font-size="11" fill="#6b778a">2021</text>
<rect x="1389.5" y="596" width="5.5" height="3.5" rx="1.7" fill="#06a0e6"/><text x="1400.5" y="601.5" font-size="11" fill="#6b778a">2022</text>
</svg>
<!--/CHARTS-->
</body></html>
